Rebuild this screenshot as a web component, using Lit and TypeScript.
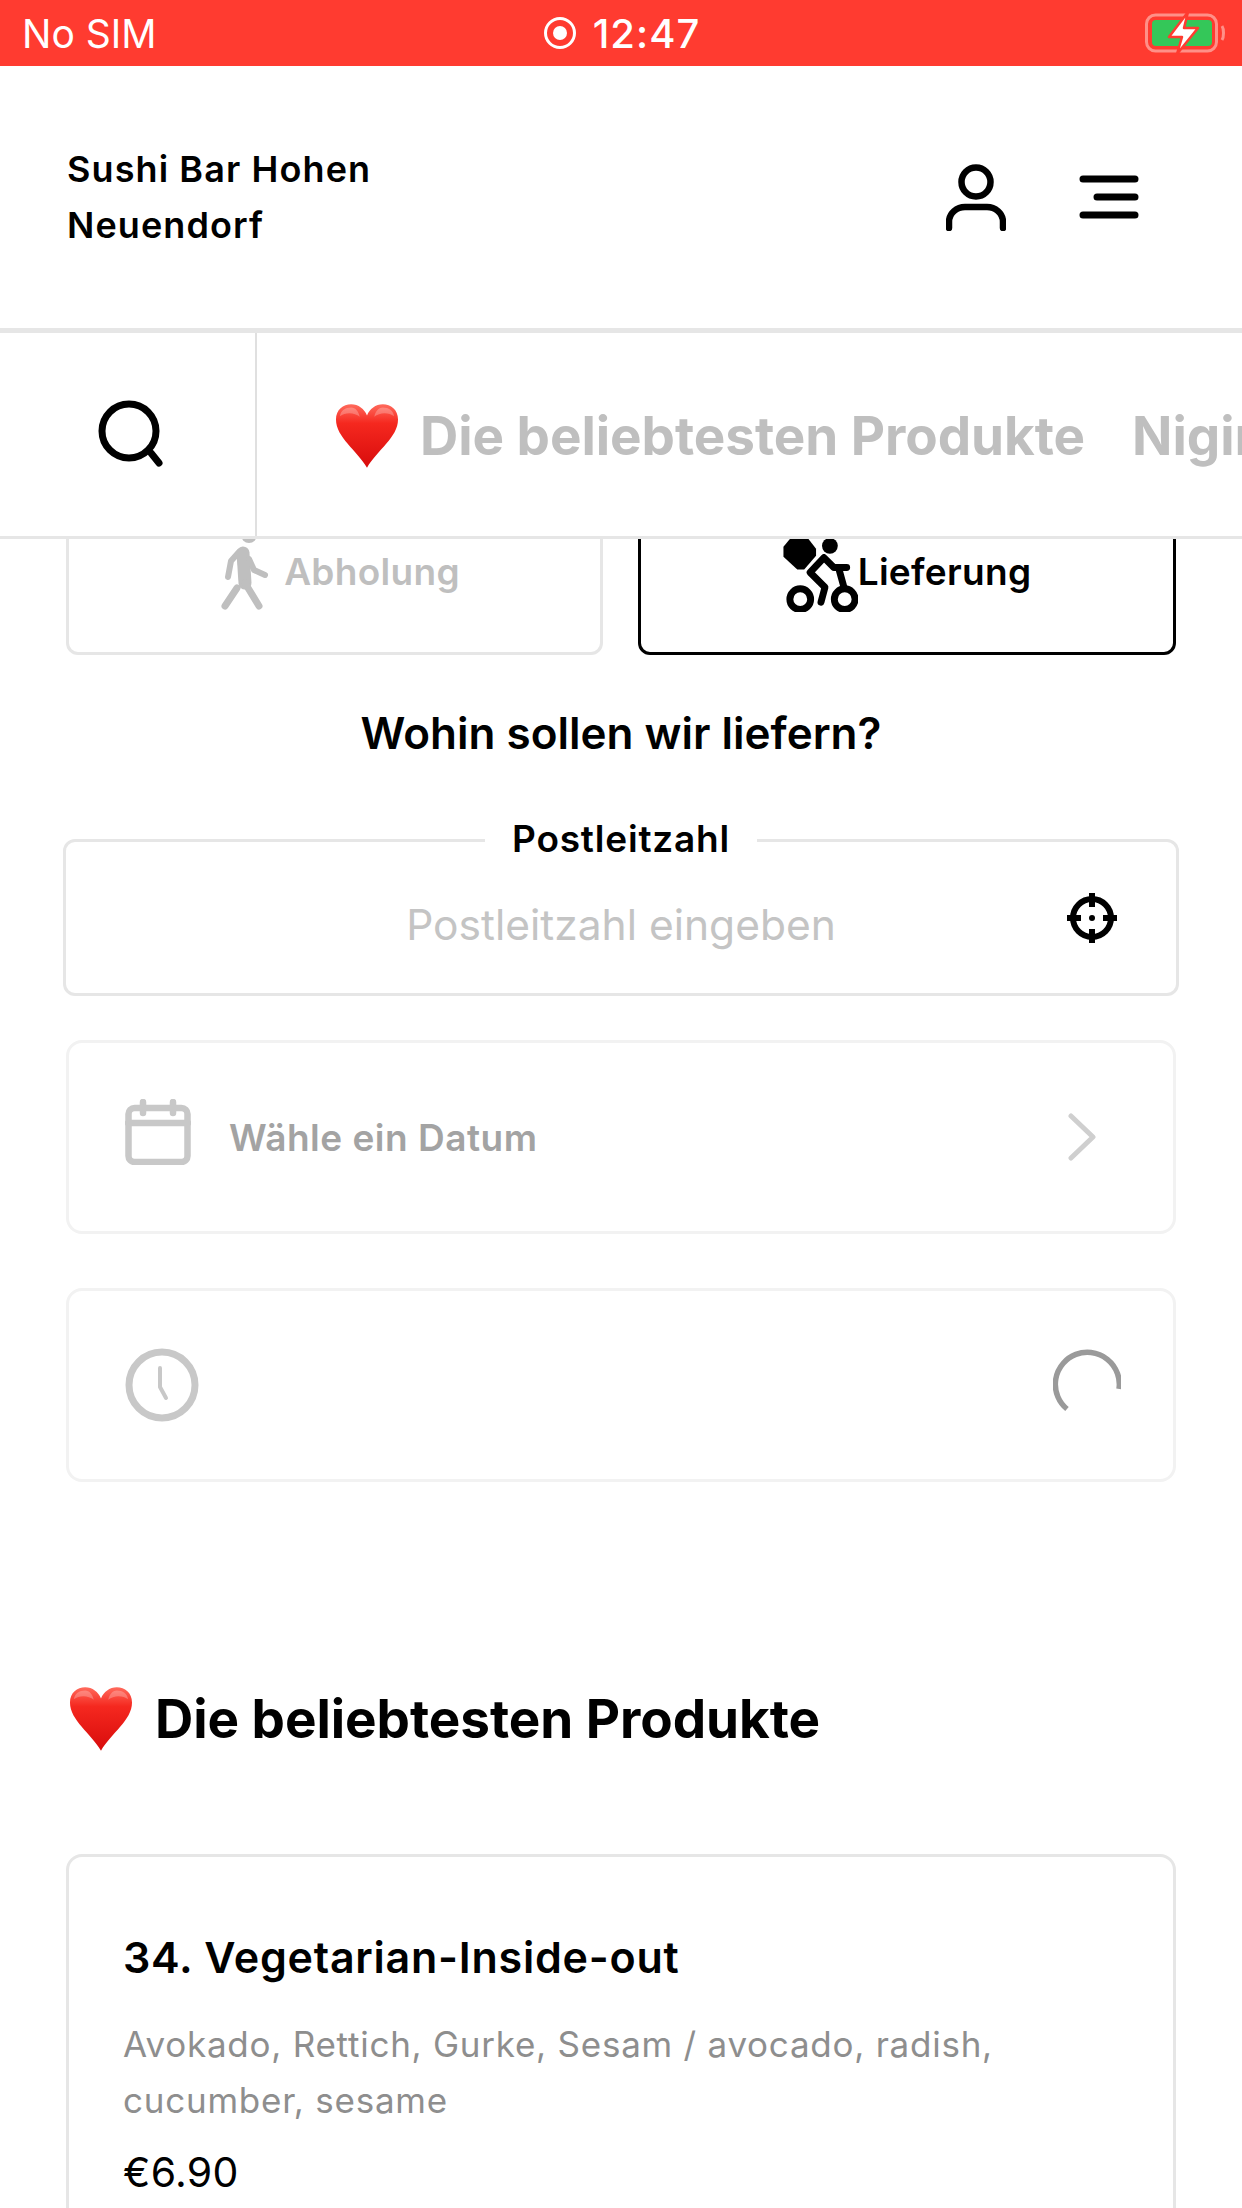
import { LitElement, html, css } from "lit";
import { customElement } from "lit/decorators.js";

const heart = (id: string) => html`<svg class="heart" viewBox="0 0 100 100" aria-hidden="true">
  <defs>
    <linearGradient id=${id} x1="0" y1="0" x2="0" y2="1">
      <stop offset="0" stop-color="#ff6a5c"></stop>
      <stop offset="0.3" stop-color="#f5281f"></stop>
      <stop offset="1" stop-color="#d80c0c"></stop>
    </linearGradient>
  </defs>
  <path fill="url(#${id})" d="M50 98C35 72 3 52 3 25 3 10 14 2 26 2c11 0 20 7 24 17C54 9 63 2 74 2c12 0 23 8 23 23 0 27-32 47-47 73Z"></path>
  <path fill="#fff" opacity=".25" d="M26 7c-9 0-16 5-17 13 8-6 22-6 30 1-2-8-6-14-13-14Zm48 0c-7 0-11 6-13 14 8-7 22-7 30-1-1-8-8-13-17-13Z"></path>
</svg>`;

@customElement("app-root")
export class AppRoot extends LitElement {
  static styles = css`
    :host {
      display: block;
      width: 1242px;
      height: 2208px;
      overflow: hidden;
      background: #fff;
      color: #000;
      font-family: Inter, "Liberation Sans", sans-serif;
    }
    svg { display: block; flex: none; }
    .status {
      height: 66px;
      background: #ff3b30;
      color: #fff;
      display: grid;
      grid-template-columns: 1fr auto 1fr;
      align-items: center;
      padding: 0 17px 0 22px;
      box-sizing: border-box;
      font-size: 39px;
    }
    .clock { display: flex; align-items: center; gap: 16px; font-weight: 500; font-size: 40px; letter-spacing: 1px; margin-left: -4px; }
    .clock svg { width: 34px; height: 34px; }
    .batt { justify-self: end; width: 80px; height: 42px; }
    .header {
      height: 262px;
      box-sizing: border-box;
      display: flex;
      align-items: center;
      justify-content: space-between;
      padding: 0 103px 0 67px;
      background: #fff;
      position: relative;
      z-index: 2;
    }
    .brand { font-size: 36px; font-weight: 600; line-height: 56px; letter-spacing: 1.1px; width: 400px; }
    .head-icons { display: flex; align-items: center; gap: 73px; }
    .nav {
      height: 211px;
      box-sizing: border-box;
      border-top: 5px solid #e6e6e6;
      border-bottom: 3px solid #e6e6e6;
      display: flex;
      background: #fff;
      position: relative;
      z-index: 2;
    }
    .search {
      width: 257px;
      flex: none;
      box-sizing: border-box;
      border-right: 2px solid #e0e0e0;
      display: flex;
      align-items: center;
      justify-content: center;
      padding: 0 0 4px 6px;
    }
    .tabs {
      flex: 1;
      min-width: 0;
      overflow: hidden;
      display: flex;
      align-items: center;
      padding: 2px 0 0 76px;
      gap: 47px;
      white-space: nowrap;
      font-size: 53px;
      font-weight: 700;
      letter-spacing: -0.05px;
      color: #bfbfbf;
    }
    .tab { display: flex; align-items: center; gap: 19px; flex: none; }
    .heart { width: 68px; height: 66px; }
    .main { padding: 0 66px; }
    .toggle {
      display: grid;
      grid-template-columns: 537px 538px;
      gap: 35px;
      margin: -50px 0 0;
      position: relative;
      z-index: 1;
    }
    .opt {
      height: 166px;
      box-sizing: border-box;
      border: 3px solid #e6e6e6;
      border-radius: 12px;
      display: flex;
      align-items: center;
      justify-content: center;
      font-size: 37px;
      font-weight: 600;
      letter-spacing: 0.3px;
      color: #bfbfbf;
      padding-bottom: 2px;
    }
    .opt.on { border-color: #000; color: #000; }
    .walk { width: 58px; height: 82px; margin: 0 14px 0 3px; }
    .bike { width: 75px; height: 82px; }
    .ask { font-size: 44px; font-weight: 600; line-height: 60px; text-align: center; margin-top: 48px; }
    .field {
      position: relative;
      margin: 76px -3px 0;
      height: 157px;
      box-sizing: border-box;
      border: 3px solid #e6e6e6;
      border-radius: 12px;
      display: grid;
      grid-template-columns: 1fr auto 1fr;
      align-items: center;
      padding-right: 56px;
    }
    .legend {
      position: absolute;
      left: 50%;
      top: -3px;
      transform: translate(-50%, -50%);
      background: #fff;
      padding: 0 27px;
      font-size: 37px;
      font-weight: 600;
      letter-spacing: 0.8px;
      line-height: 44px;
      white-space: nowrap;
    }
    .ph { grid-column: 2; font-size: 42.5px; color: #c4c4c4; transform: translateY(7px); margin-left: 56px; white-space: nowrap; }
    .locate { justify-self: end; grid-column: 3; width: 56px; height: 56px; }
    .row {
      height: 194px;
      box-sizing: border-box;
      border: 3px solid #f2f2f2;
      border-radius: 16px;
      display: flex;
      align-items: center;
      justify-content: space-between;
      padding: 0 77px 0 56px;
    }
    .row.date { margin-top: 44px; }
    .row.time { margin-top: 54px; padding-right: 52px; }
    .row-l { display: flex; align-items: center; gap: 38px; font-size: 37px; font-weight: 600; letter-spacing: 0.5px; color: #a3a3a3; }
    .cal { margin-top: -10px; }
    .spin { margin-top: -5px; }
    .h2 {
      margin: 202px 0 0 1px;
      display: flex;
      align-items: center;
      gap: 20px;
      font-size: 53px;
      letter-spacing: -0.05px;
      line-height: 70px;
      font-weight: 700;
    }
    .card {
      margin-top: 100px;
      height: 500px;
      box-sizing: border-box;
      border: 3px solid #e6e6e6;
      border-radius: 16px;
      padding: 70px 54px 0;
    }
    .name { font-size: 43px; font-weight: 600; line-height: 60px; letter-spacing: 0.75px; }
    .desc { margin-top: 29px; font-size: 35px; line-height: 56px; color: #8e8e8e; letter-spacing: 0.75px; width: 950px; }
    .price { margin-top: 16px; font-size: 41px; line-height: 56px; letter-spacing: 0.3px; }
  `;

  render() {
    return html`
      <div class="status">
        <span>No SIM</span>
        <span class="clock">
          <svg viewBox="0 0 34 34" fill="none"><circle cx="17" cy="17" r="14.5" stroke="#fff" stroke-width="3"></circle><circle cx="17" cy="17" r="7" fill="#fff"></circle></svg>
          12:47
        </span>
        <svg class="batt" viewBox="0 0 80 42" fill="none">
          <rect x="1.5" y="3" width="70" height="36" rx="9" stroke="#ff9088" stroke-width="3"></rect>
          <rect x="7" y="8" width="60" height="26" rx="4" fill="#34c759"></rect>
          <path d="M77 14c2 3 2 11 0 14" stroke="#ff9088" stroke-width="3"></path>
          <path d="M43 0 24 25h13l-5 17 21-26H39l4-16Z" fill="#fff" stroke="#ff3b30" stroke-width="2.5" stroke-linejoin="round"></path>
        </svg>
      </div>

      <div class="header">
        <div class="brand">Sushi Bar Hohen Neuendorf</div>
        <div class="head-icons">
          <svg width="60" height="68" viewBox="0 0 60 68" fill="none" stroke="#000" stroke-width="6.5" stroke-linecap="round">
            <circle cx="30" cy="19" r="14.5"></circle>
            <path d="M3 65v-6c0-9 8-15 16-15h22c8 0 16 6 16 15v6"></path>
          </svg>
          <svg width="60" height="44" viewBox="0 0 60 44" fill="none" stroke="#000" stroke-width="7" stroke-linecap="round">
            <path d="M4 4h52M18 22h38M4 40h52"></path>
          </svg>
        </div>
      </div>

      <div class="nav">
        <div class="search">
          <svg width="68" height="68" viewBox="0 0 68 68" fill="none" stroke="#000" stroke-width="7" stroke-linecap="round">
            <circle cx="32" cy="32" r="27"></circle>
            <path d="M54 54l8 10"></path>
          </svg>
        </div>
        <div class="tabs">
          <span class="tab">${heart("h1")}Die beliebtesten Produkte</span>
          <span class="tab">Nigiri</span>
        </div>
      </div>

      <div class="main">
        <div class="toggle">
          <div class="opt">
            <svg class="walk" viewBox="212 530 58 82" fill="none" stroke="#bfbfbf" stroke-linecap="round" stroke-linejoin="round">
              <circle cx="249" cy="535" r="8" fill="#bfbfbf" stroke="none"></circle>
              <path d="M243 553l2 30" stroke-width="13"></path>
              <path d="M239 552l-8 9-3 16M249 559l5 11 11 5" stroke-width="6"></path>
              <path d="M245 583l14 23M237 588l-12 18" stroke-width="7"></path>
            </svg>
            <span>Abholung</span>
          </div>
          <div class="opt on">
            <svg class="bike" viewBox="781 530 75 83" fill="none" stroke="#000" stroke-linecap="round" stroke-linejoin="round">
              <path d="M790 536h14l10 13v7l-12 14h-7l-14-13v-10Z" fill="#000" stroke="none"></path>
              <circle cx="828" cy="546" r="8" fill="#000" stroke="none"></circle>
              <circle cx="798" cy="600" r="10.5" stroke-width="7"></circle>
              <circle cx="843" cy="600" r="10.5" stroke-width="7"></circle>
              <path d="M822 558l-14 15 15 15-4 15M822 558l10 10h13M837 569l5 18" stroke-width="7"></path>
            </svg>
            <span>Lieferung</span>
          </div>
        </div>

        <div class="ask">Wohin sollen wir liefern?</div>

        <div class="field">
          <span class="legend">Postleitzahl</span>
          <span class="ph">Postleitzahl eingeben</span>
          <svg class="locate" viewBox="0 0 56 56" fill="none" stroke="#000" stroke-width="6">
            <circle cx="28" cy="28" r="19"></circle>
            <path d="M28 3v14M28 39v14M3 28h14M39 28h14"></path>
            <circle cx="28" cy="28" r="3" fill="#000" stroke="none"></circle>
          </svg>
        </div>

        <div class="row date">
          <div class="row-l">
            <svg class="cal" width="66" height="66" viewBox="0 0 66 66" fill="none" stroke="#c8c8c8" stroke-width="6.5" stroke-linecap="round">
              <rect x="3.5" y="9" width="59" height="54" rx="6"></rect>
              <path d="M3 24h60M18 3v11M48 3v11"></path>
            </svg>
            <span>Wähle ein Datum</span>
          </div>
          <svg width="28" height="48" viewBox="0 0 28 48" fill="none" stroke="#cfcfcf" stroke-width="5" stroke-linecap="round" stroke-linejoin="round">
            <path d="M3 3l22 21L3 45"></path>
          </svg>
        </div>

        <div class="row time">
          <svg width="74" height="74" viewBox="0 0 74 74" fill="none" stroke="#c8c8c8" stroke-width="7" stroke-linecap="round" stroke-linejoin="round">
            <circle cx="37" cy="37" r="33"></circle>
            <path d="M35 20v19l6 11" stroke-width="4"></path>
          </svg>
          <svg class="spin" width="68" height="68" viewBox="0 0 68 68" fill="none" stroke="#9a9a9a" stroke-width="5.5">
            <path d="M66 40A32 32 0 1 0 14 60"></path>
          </svg>
        </div>

        <div class="h2">${heart("h2")}<span>Die beliebtesten Produkte</span></div>

        <div class="card">
          <div class="name">34. Vegetarian-Inside-out</div>
          <div class="desc">Avokado, Rettich, Gurke, Sesam / avocado, radish, cucumber, sesame</div>
          <div class="price">€6.90</div>
        </div>
      </div>
    `;
  }
}
